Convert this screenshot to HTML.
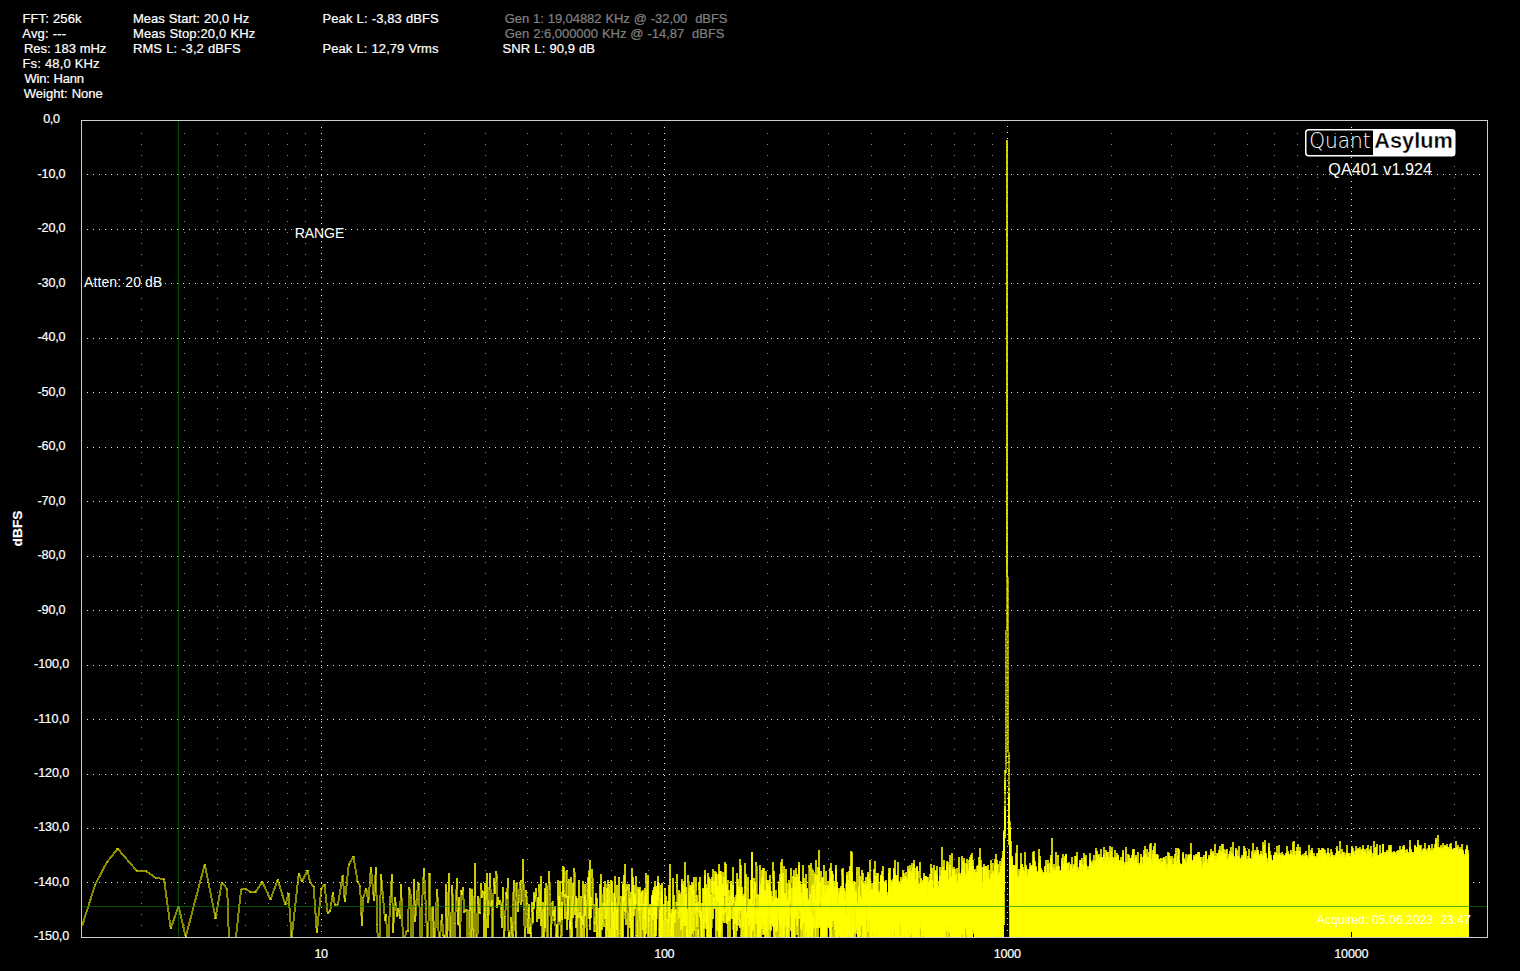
<!DOCTYPE html>
<html lang="en"><head><meta charset="utf-8"><title>QA401 Audio Analyzer</title>
<style>
html,body{margin:0;padding:0;background:#000;width:1520px;height:971px;overflow:hidden}
svg{position:absolute;left:0;top:0;display:block}
text{font-family:"Liberation Sans",Arial,sans-serif;white-space:pre}
.px{shape-rendering:crispEdges;fill:none;stroke-width:1}
</style></head><body>
<svg width="1520" height="971" viewBox="0 0 1520 971">
<rect width="1520" height="971" fill="#000"/>
<g class="px"><path d="M87 174.5h1393M87 229.5h1393M87 283.5h1393M87 338.5h1393M87 392.5h1393M87 447.5h1393M87 501.5h1393M87 556.5h1393M87 610.5h1393M87 665.5h1393M87 719.5h1393M87 774.5h1393M87 828.5h1393M87 882.5h1393" stroke="#e2e2e2" stroke-dasharray="1 5"/><path d="M141.5 133v793M184.5 133v793M217.5 133v793M245.5 133v793M268.5 133v793M287.5 133v793M305.5 133v793M485.5 133v793M527.5 133v793M561.5 133v793M588.5 133v793M611.5 133v793M631.5 133v793M648.5 133v793M828.5 133v793M871.5 133v793M904.5 133v793M931.5 133v793M954.5 133v793M974.5 133v793M992.5 133v793M1171.5 133v793M1214.5 133v793M1247.5 133v793M1274.5 133v793M1297.5 133v793M1317.5 133v793M1335.5 133v793M424.5 133v793M767.5 133v793M1111.5 133v793M1454.5 133v793" stroke="#8c8c8c" stroke-dasharray="1 10"/><path d="M321.5 127v805M664.5 127v805M1351.5 127v805M1007.5 126v805" stroke="#ececec" stroke-dasharray="1 5"/></g>
<g class="px">
<path transform="translate(.5 0)" stroke="#ff0" stroke-opacity="0.55" d="M82 921v5M83 918v7M84 915v7M85 912v6M86 909v6M87 906v6M88 902v7M89 899v7M90 896v7M91 893v7M92 890v6M93 887v6M94 885v5M95 882v2M95 885v2M96 880v4M97 878v4M98 876v4M99 874v4M100 872v5M101 870v5M102 868v5M103 866v5M104 865v4M105 863v4M106 861v1M106 863v2M107 860v2M108 859v3M109 857v3M110 856v3M111 855v3M112 854v3M113 852v4M114 851v3M115 850v3M116 849v3M117 850v1M118 849v2M119 849v3M120 850v4M121 852v3M122 853v3M123 854v3M124 855v3M125 856v3M126 857v3M127 859v3M128 860v3M129 861v3M130 862v3M131 863v3M132 864v3M133 866v3M134 867v3M135 868v3M136 869v1M136 871v1M137 871v1M138 870v2M139 870v2M140 870v2M141 870v2M142 870v2M143 870v2M144 870v2M145 870v2M146 872v1M147 871v2M148 872v2M149 872v3M150 873v2M151 874v2M152 874v3M153 875v3M154 876v2M156 877v2M157 877v2M158 877v2M159 877v2M160 878v2M161 878v2M162 878v2M163 878v1M163 880v3M164 878v1M164 880v10M165 883v15M166 890v15M167 897v15M168 905v15M169 912v15M170 920v6M171 923v4M172 920v6M173 917v7M174 915v6M175 912v6M176 909v6M177 906v6M178 909v1M179 906v9M180 910v9M181 914v9M182 919v9M183 923v9M184 927v9M185 932v2M186 930v6M187 926v8M188 922v8M189 918v8M190 915v8M191 911v8M192 907v8M193 903v8M194 899v8M195 895v8M196 892v8M197 888v8M198 884v8M199 880v8M200 876v8M201 873v7M202 869v8M203 865v8M204 868v1M205 865v8M206 868v10M207 873v10M208 878v10M209 883v10M210 888v10M211 893v10M212 898v10M213 903v10M214 908v10M215 912v1M216 907v11M217 901v11M218 895v12M219 890v11M220 884v12M221 883v7M222 884v1M223 883v3M224 884v3M225 885v4M226 887v2M226 890v8M227 888v1M227 890v37M228 898v39M229 927v10M235 932v5M236 923v14M237 913v19M238 904v19M239 895v18M240 889v15M241 888v1M241 890v5M242 888v2M243 888v2M244 888v2M246 888v3M247 889v2M248 890v2M249 890v3M251 891v2M252 891v2M253 891v2M254 891v1M255 890v1M256 889v4M257 887v4M258 886v3M259 884v4M260 882v4M261 883v2M262 883v2M263 882v5M264 884v5M265 886v5M266 889v4M267 891v5M268 893v5M269 895v5M271 894v5M272 891v6M273 888v6M274 886v5M275 883v6M276 880v6M277 882v1M278 880v6M279 882v7M280 885v7M281 889v7M282 892v7M283 895v7M284 899v5M285 901v1M286 897v8M287 894v7M288 897v11M289 894v28M290 908v29M291 922v8M292 921v16M293 912v18M294 903v18M295 894v18M296 885v18M297 876v18M298 876v9M299 876v2M300 875v6M301 878v2M302 878v2M303 876v5M304 874v5M305 872v5M306 871v4M307 873v2M308 871v9M309 875v7M310 879v3M310 883v1M311 882v4M312 884v3M313 885v1M313 887v12M314 887v27M315 899v29M316 913v13M317 916v12M318 907v19M319 897v19M320 889v18M321 887v1M321 889v8M322 885v4M323 884v3M324 886v8M325 885v18M326 894v18M327 903v9M328 911v1M329 909v1M329 912v1M330 902v8M331 895v14M332 897v5M333 895v8M334 897v7M334 905v1M335 903v1M335 905v1M336 904v2M337 901v3M337 905v1M338 895v10M339 889v12M340 882v13M341 876v13M342 882v4M343 876v22M344 886v9M345 886v12M346 876v19M347 867v19M348 863v1M348 865v11M349 861v3M349 865v2M350 860v4M351 858v4M352 857v3M353 858v5M354 856v13M355 863v12M356 869v13M357 875v6M357 882v1M358 882v3M359 883v3M359 887v8M360 885v1M360 887v29M361 895v17M362 898v18M363 894v3M363 898v14M364 890v7M365 891v3M366 891v6M367 890v10M368 887v10M369 873v27M370 874v13M371 873v11M372 874v21M373 884v8M374 875v20M375 892v4M376 875v49M376 925v8M377 895v29M377 925v12M378 933v4M379 895v42M380 880v57M381 891v4M382 880v17M382 898v5M383 891v6M383 898v16M384 903v14M385 921v3M386 917v20M387 924v13M388 916v21M389 896v8M389 905v32M390 881v23M390 905v12M391 897v6M392 882v41M393 903v3M394 902v21M395 906v5M396 902v10M398 912v4M399 901v9M400 898v17M401 901v26M402 898v39M403 927v10M404 935v2M405 931v6M406 930v1M406 932v3M407 909v21M408 890v40M409 895v14M410 889v8M410 898v39M411 894v3M411 898v39M412 905v32M413 900v37M414 905v10M415 900v4M416 890v9M416 900v16M417 883v16M417 900v5M418 891v16M419 883v1M419 885v52M420 907v30M421 895v9M421 905v32M422 877v27M422 905v32M423 880v15M424 877v15M424 893v7M425 880v12M425 893v15M425 909v14M426 900v8M426 909v28M427 921v2M428 874v63M429 907v14M430 873v1M430 875v62M431 907v30M432 921v16M434 921v7M435 902v35M436 897v31M437 902v3M437 906v25M438 897v8M438 906v31M439 931v1M440 920v17M441 925v7M442 920v15M443 924v11M444 934v1M445 917v20M447 892v25M448 916v15M449 892v45M450 912v4M451 895v42M452 912v25M453 894v10M453 905v32M454 912v11M454 924v13M455 889v34M455 924v13M456 901v11M457 889v21M458 925v1M459 911v11M460 892v33M461 895v27M462 895v5M463 891v20M464 899v11M465 910v1M466 911v26M467 909v1M467 911v26M468 910v23M468 934v3M469 929v4M469 934v3M470 911v18M472 930v7M473 896v32M474 913v17M474 931v6M475 897v40M476 913v21M477 904v33M478 913v21M479 898v6M480 890v22M482 890v1M483 895v18M485 913v1M486 900v19M488 887v13M489 890v12M489 903v12M490 888v15M491 889v11M491 907v30M492 893v7M493 886v23M493 910v27M495 874v11M496 882v20M497 874v3M497 878v19M500 902v6M500 909v9M501 902v2M502 916v1M503 902v28M504 910v6M505 895v9M505 905v11M505 917v14M506 888v4M506 899v5M506 905v5M507 899v32M508 888v44M509 930v2M510 922v15M511 935v2M512 892v12M512 905v17M513 901v3M513 905v29M514 892v30M514 923v8M515 883v18M516 882v1M516 897v34M517 882v1M517 884v18M518 889v6M518 896v1M519 882v2M519 885v10M519 896v7M520 890v12M521 882v7M522 884v16M522 901v1M523 890v19M523 910v16M524 884v25M524 910v18M525 897v16M525 914v12M526 907v6M526 914v14M527 896v7M527 904v6M527 911v7M529 919v8M530 918v6M531 912v20M532 923v2M533 909v3M535 900v2M536 896v13M538 892v5M541 926v10M542 906v3M545 885v3M545 928v4M546 905v32M547 885v2M547 888v1M548 883v25M548 909v28M549 890v4M549 895v9M549 905v11M550 882v12M550 895v9M550 905v19M551 902v1M551 904v12M552 916v8M553 902v8M553 916v3M554 921v5M555 920v14M557 900v24M558 921v15M559 922v3M560 922v13M561 892v10M561 920v5M562 897v5M562 920v16M563 897v8M564 882v9M564 892v2M565 871v2M565 874v20M565 898v6M566 898v14M567 872v24M569 899v6M569 906v15M569 929v8M572 918v5M572 924v2M573 872v2M573 875v8M574 896v9M575 872v4M575 877v19M575 915v6M576 928v9M578 918v19M579 911v1M579 918v19M582 898v18M582 925v3M585 916v12M586 883v7M586 891v9M587 907v21M591 878v19M592 905v4M593 878v9M593 888v16M593 906v16M593 923v9M594 904v1M594 906v11M595 925v5M601 930v7M602 894v9M604 919v4M606 884v4M616 898v4M619 905v25M619 931v2M619 934v3M620 898v5M622 881v3M624 912v2M624 915v4M626 913v6M627 890v21M628 907v6M635 909v26M635 936v1M636 905v2M642 930v7M645 882v6M657 907v2M657 910v9M658 907v22M658 930v7M675 903v6M676 893v9M676 906v3M677 906v1M680 892v2M687 882v27M689 881v4M692 934v3M694 931v6M696 891v4M697 927v2M698 890v12M699 917v20M711 893v1M712 919v9M717 931v6M724 896v1M728 882v8M732 919v11M740 928v7M740 936v1M755 866v16M757 866v4M757 871v23M758 894v1M772 878v18M778 881v1M791 883v5M797 935v2M799 919v18M808 868v31M812 868v2M814 872v2M832 927v2M841 875v11M845 883v2M845 886v5M863 880v2M879 882v8M879 891v1M883 875v1M919 878v5M993 865v6M1003 830v1M1004 772v1M1004 774v4M1004 779v1M1004 791v1M1004 794v4M1004 799v2M1004 803v3M1004 892v2M1005 630v3M1005 634v5M1005 640v5M1005 646v5M1005 652v5M1005 658v4M1005 663v3M1005 667v5M1005 673v4M1005 678v3M1005 682v3M1005 686v4M1005 691v3M1005 695v3M1005 699v3M1005 703v3M1005 707v3M1005 711v3M1005 715v2M1005 718v3M1005 722v2M1005 725v2M1005 728v4M1005 733v2M1005 736v3M1005 740v3M1005 744v2M1005 747v1M1005 749v2M1005 752v2M1005 755v1M1005 758v2M1005 761v2M1005 764v6M1005 774v4M1005 779v1M1005 791v1M1005 794v4M1005 799v2M1005 803v3M1006 577v3M1006 581v8M1006 590v7M1006 598v7M1006 606v7M1006 614v6M1006 621v6M1006 628v5M1006 634v5M1006 640v5M1006 646v5M1006 652v5M1006 658v4M1006 663v3M1006 667v5M1006 673v4M1006 678v3M1006 682v3M1006 686v4M1006 691v3M1006 695v3M1006 699v3M1006 703v3M1006 707v3M1006 711v3M1006 715v2M1006 718v3M1006 722v2M1006 725v2M1006 728v4M1006 733v2M1006 736v3M1006 740v3M1006 744v2M1006 747v1M1006 749v2M1006 752v2M1006 755v1M1006 758v2M1006 761v2M1006 764v7M1007 630v4M1007 635v6M1007 642v5M1007 648v4M1007 653v4M1007 658v5M1007 664v4M1007 669v3M1007 673v4M1007 678v4M1007 683v4M1007 688v2M1007 691v5M1007 697v2M1007 700v3M1007 704v2M1007 707v4M1007 712v1M1007 714v3M1007 718v4M1007 723v2M1007 726v1M1007 728v2M1007 731v3M1007 735v2M1007 738v3M1007 743v4M1007 748v2M1007 751v2M1008 577v5M1008 583v8M1008 592v7M1008 600v7M1008 608v6M1008 615v6M1008 622v6M1008 629v5M1008 635v6M1008 642v5M1008 648v4M1008 653v4M1008 658v5M1008 664v4M1008 669v3M1008 673v4M1008 678v4M1008 683v4M1008 688v2M1008 691v5M1008 697v2M1008 700v3M1008 704v2M1008 707v4M1008 712v1M1008 714v3M1008 718v4M1008 723v2M1008 726v1M1008 728v2M1008 731v3M1008 735v2M1008 738v3M1008 743v4M1008 748v2M1008 751v4M1008 757v1M1008 759v2M1008 763v6M1008 772v1M1008 774v1M1008 776v2M1008 779v3M1008 784v4M1008 791v2M1009 752v3M1009 757v1M1009 759v2M1009 763v6M1009 772v1M1009 774v1M1009 776v2M1009 779v3M1009 784v4M1009 791v2M1010 821v2M1010 825v2"/>
<path transform="translate(.5 0)" stroke="#ff0" stroke-opacity="0.798" d="M94 884v1M95 884v1M106 862v1M107 862v1M116 848v1M117 848v2M118 848v1M136 870v1M137 870v1M146 870v2M155 877v2M163 879v1M164 879v1M170 926v3M171 927v2M178 906v3M185 934v3M186 936v1M204 864v4M205 864v1M214 918v1M215 913v6M216 918v1M221 882v1M222 882v2M226 889v1M227 889v1M241 889v1M245 888v2M250 891v2M254 892v1M255 891v2M261 881v2M262 881v2M270 897v3M271 899v1M277 879v3M278 879v1M284 904v1M285 902v3M287 893v1M288 893v4M289 893v1M291 930v7M298 873v3M299 873v3M301 880v2M302 880v2M306 870v1M307 870v3M308 870v1M309 882v1M310 882v1M313 886v1M314 886v1M316 926v7M317 928v5M320 888v1M321 888v1M324 884v2M325 884v1M327 912v2M328 912v2M329 910v2M330 910v2M332 892v5M333 892v3M334 904v1M335 904v1M337 904v1M342 875v7M343 875v1M344 895v7M345 898v4M348 864v1M349 864v1M352 856v1M353 856v2M357 881v1M358 881v1M359 886v1M360 886v1M361 912v14M362 897v1M362 916v10M363 897v1M365 888v3M366 888v3M367 900v3M368 897v6M370 867v7M371 867v6M373 892v9M374 895v6M375 867v25M376 867v8M376 924v1M377 924v1M380 874v6M381 874v17M382 897v1M383 897v1M384 917v4M386 914v3M389 904v1M390 904v1M391 874v23M392 874v8M392 923v10M393 906v27M394 897v5M395 897v9M396 912v5M397 908v9M398 908v4M399 910v9M400 884v14M400 915v4M401 884v17M406 931v1M407 930v2M408 887v3M408 930v2M409 887v8M410 897v1M411 897v1M413 879v21M414 879v26M414 915v7M415 904v18M416 899v1M417 882v1M417 899v1M418 882v2M418 885v6M419 884v1M421 904v1M422 904v1M423 868v12M424 868v9M424 892v1M425 892v1M425 908v1M426 908v1M427 923v14M428 873v1M429 873v1M429 875v32M430 874v1M432 906v15M433 906v30M434 928v8M436 889v8M437 889v13M437 905v1M438 905v1M439 932v5M441 914v11M442 914v6M442 935v1M443 935v2M444 935v1M445 884v33M446 884v47M446 934v3M447 917v20M448 873v43M449 873v19M450 916v21M451 885v10M452 885v19M452 905v7M453 904v1M454 923v1M455 923v1M456 878v23M457 878v11M457 910v15M458 897v4M459 897v14M459 922v15M460 890v2M460 925v12M462 887v5M463 887v4M463 911v2M464 910v1M464 912v1M465 909v1M465 911v1M466 909v2M467 910v1M468 933v1M469 888v41M469 933v1M470 888v23M470 929v8M471 889v48M472 889v41M473 928v2M473 931v6M474 863v50M474 930v1M475 863v34M476 934v3M477 896v8M478 896v16M479 904v8M479 913v1M480 883v7M480 912v2M481 883v11M482 893v5M483 891v4M483 913v24M484 883v9M484 920v17M485 883v30M485 914v23M486 873v27M486 919v18M487 873v41M487 915v13M488 900v2M488 903v25M489 873v17M489 902v1M490 873v15M490 903v4M492 903v6M492 910v27M493 878v8M493 909v1M494 878v4M495 871v3M495 885v9M496 871v6M496 878v4M496 902v6M497 877v1M497 901v7M498 897v8M499 904v1M500 900v2M500 908v1M501 904v4M501 909v8M501 918v10M502 887v29M502 918v10M503 887v15M503 930v7M504 917v20M505 892v3M505 904v1M505 916v1M506 904v1M507 878v17M508 878v10M510 917v5M511 917v10M511 928v7M512 904v1M512 922v5M512 928v9M513 880v21M513 904v1M513 934v3M514 880v12M514 922v1M515 901v21M515 923v14M516 884v13M516 931v6M517 883v1M517 902v8M517 911v1M518 895v1M518 897v13M518 911v1M519 884v1M519 895v1M520 880v4M520 885v5M520 902v3M521 880v2M521 889v11M521 901v4M522 859v20M522 880v4M522 900v1M523 859v20M523 880v10M523 909v1M524 909v1M524 928v9M525 890v7M525 913v1M525 926v11M526 890v13M526 904v3M526 913v1M527 903v1M527 910v1M527 918v16M528 904v2M528 919v15M529 904v15M529 933v1M530 924v3M530 934v3M531 902v9M531 932v5M532 902v5M533 892v10M533 912v11M534 892v3M534 907v2M535 888v7M535 897v3M536 888v7M536 909v3M536 913v9M537 897v3M537 908v4M537 913v9M538 884v8M538 909v10M539 884v15M539 900v7M539 912v7M540 876v15M540 910v16M541 876v36M541 936v1M542 902v4M542 909v28M543 902v8M543 911v20M544 888v17M544 928v9M545 883v2M546 883v4M546 888v10M546 899v6M547 887v1M547 889v9M547 899v9M547 909v28M548 871v12M548 908v1M549 871v19M549 894v1M549 904v1M550 894v1M550 904v1M550 924v4M550 929v8M551 903v1M551 916v12M551 929v8M552 901v2M552 904v8M553 901v1M553 919v2M554 906v4M555 906v13M555 934v3M556 924v1M557 880v20M557 935v1M558 880v16M558 936v1M559 881v15M560 881v27M560 935v2M561 925v12M562 866v15M563 866v1M564 867v15M564 891v1M564 896v23M565 873v1M565 904v15M566 870v3M566 874v21M566 912v18M567 870v2M567 920v10M568 879v17M568 917v3M569 879v20M569 905v1M570 877v39M570 929v8M571 877v26M572 883v12M572 923v1M572 926v11M573 868v4M573 874v1M573 903v15M574 868v6M574 875v1M574 877v19M574 905v10M575 876v1M575 921v7M576 896v2M577 898v12M577 921v16M578 880v34M579 880v31M580 896v16M580 929v8M581 896v20M582 881v17M582 928v9M583 881v33M583 925v12M584 884v11M584 916v21M585 884v11M586 890v1M586 900v5M586 907v30M587 877v13M587 891v4M587 896v11M587 928v9M588 871v6M588 900v19M589 860v11M589 919v11M590 860v37M590 919v11M591 869v9M591 908v10M592 869v18M592 888v12M592 901v3M593 887v1M593 904v2M593 922v1M594 905v1M594 917v5M594 924v6M595 893v19M595 913v10M595 924v1M595 930v2M596 893v5M597 898v27M598 908v29M599 884v24M600 874v10M601 874v34M602 924v6M603 887v16M603 909v12M603 922v5M604 881v6M604 923v4M605 881v21M605 919v18M607 880v8M607 931v6M608 880v4M609 884v6M610 880v20M610 901v27M611 880v1M612 881v21M613 893v19M614 876v17M615 876v21M616 885v13M616 902v5M616 908v1M616 930v7M617 885v19M618 878v19M618 904v6M618 911v21M618 933v4M619 878v27M619 930v1M619 933v1M620 896v2M620 903v27M620 931v2M620 934v3M621 896v3M621 900v10M623 875v9M623 910v27M624 864v11M624 914v1M625 864v25M625 912v2M625 915v10M626 884v3M626 888v1M626 891v3M626 895v18M626 919v6M627 884v3M627 888v1M627 911v26M628 884v4M628 889v2M628 892v15M628 913v24M629 884v4M629 889v2M629 892v6M629 921v2M629 924v4M630 892v6M630 928v2M630 931v6M631 868v8M631 877v15M632 868v8M633 877v8M633 916v21M634 885v8M634 909v7M635 876v18M635 935v1M636 876v26M636 903v2M636 907v18M636 926v6M636 933v2M636 936v1M637 887v3M637 891v29M638 887v2M638 911v26M639 887v2M639 921v16M640 887v6M641 891v1M641 910v27M642 890v1M643 890v12M643 903v1M643 930v7M644 888v8M645 873v9M645 934v3M646 873v17M646 891v1M646 928v6M647 875v6M647 907v16M647 924v13M648 875v33M649 904v1M649 915v2M649 922v15M650 904v1M650 916v8M650 925v12M651 895v1M652 890v2M652 920v17M653 887v3M653 920v15M653 936v1M654 881v6M655 881v5M655 936v1M656 930v6M657 876v6M657 909v1M658 876v6M658 929v1M659 883v8M659 895v3M659 899v11M660 885v13M661 883v2M662 883v8M663 904v4M663 909v11M664 889v15M665 889v7M666 896v2M666 899v11M666 912v6M667 901v18M668 885v16M669 864v15M669 880v5M670 864v15M670 880v14M670 895v5M670 901v12M670 936v1M671 909v4M672 878v31M673 878v17M674 895v15M674 923v14M675 902v1M675 909v1M675 923v14M676 874v12M676 887v6M676 909v1M676 911v26M677 874v12M677 887v16M677 907v5M677 914v4M677 919v18M678 890v3M678 919v18M679 890v4M679 918v19M680 930v7M681 879v5M681 930v7M682 879v5M683 881v6M683 926v11M684 862v19M684 926v11M685 862v25M685 926v11M686 887v4M686 892v2M687 875v7M688 875v13M688 889v1M690 885v1M691 882v4M691 934v3M692 882v2M693 877v7M693 931v6M694 877v13M695 877v8M695 886v10M695 897v2M695 901v2M695 915v22M696 877v8M696 886v5M696 927v10M697 895v7M697 913v1M698 882v1M698 884v6M698 913v16M699 877v5M700 877v12M700 931v6M701 903v8M702 888v1M702 890v13M703 888v1M704 870v5M704 928v9M705 870v5M705 922v7M706 884v4M706 929v8M707 873v8M707 882v6M708 873v4M709 877v2M710 879v15M711 877v4M712 869v8M713 869v12M713 908v8M713 917v2M714 871v10M714 894v3M714 908v1M715 871v1M715 909v28M716 872v2M716 931v6M717 874v10M717 885v1M718 864v10M719 864v7M721 871v4M721 931v1M721 933v4M722 872v12M722 921v11M722 933v4M723 872v5M723 921v2M724 862v2M724 865v12M724 897v12M724 914v9M725 862v2M725 912v11M726 864v18M726 923v1M727 880v4M727 924v13M728 880v2M728 902v1M728 921v16M729 890v6M729 921v16M730 882v1M730 919v18M731 882v1M731 905v14M732 867v18M733 867v18M733 903v3M734 897v5M734 903v3M735 895v4M735 924v9M735 934v3M736 873v21M736 931v2M736 934v3M737 873v6M737 925v6M738 879v3M738 883v3M738 920v6M739 859v28M739 926v2M740 859v6M740 911v8M740 935v1M741 865v22M742 887v7M742 895v1M743 894v2M744 863v24M744 888v6M745 863v11M746 874v38M747 877v12M747 890v15M748 877v12M748 890v9M748 936v1M750 880v19M752 931v6M753 878v1M753 880v8M753 931v6M754 878v1M754 880v2M755 862v4M755 898v10M755 924v11M755 936v1M756 862v8M756 871v23M756 924v3M756 928v9M757 870v1M759 865v19M760 865v19M761 870v7M761 929v8M762 868v2M762 929v2M762 932v3M763 934v1M764 868v1M764 870v20M764 934v3M765 871v19M766 871v9M768 880v1M768 882v1M769 875v5M769 929v8M770 875v11M770 931v6M771 891v1M771 893v3M771 925v3M771 929v2M772 862v16M772 925v2M773 862v9M773 935v2M774 871v6M775 890v7M775 932v3M776 890v7M776 932v5M777 931v6M778 920v17M779 874v8M780 862v12M781 859v3M782 859v14M783 866v7M784 866v27M785 869v7M785 877v16M785 927v10M786 869v7M786 877v6M787 883v14M788 880v10M789 880v3M789 928v9M790 868v5M790 874v10M790 904v4M790 916v12M790 929v2M791 868v5M791 874v9M792 876v1M792 878v10M793 870v6M794 870v7M795 868v9M795 919v18M796 868v6M796 926v9M797 874v3M798 862v3M798 919v18M799 862v3M800 881v3M800 929v8M801 884v9M802 865v19M802 931v6M803 865v13M804 878v6M805 874v10M806 874v14M807 888v1M808 865v3M809 865v5M809 871v21M809 893v1M810 863v4M810 869v1M810 871v21M810 893v1M811 863v11M811 875v11M812 872v2M812 875v9M813 870v4M813 875v9M813 930v7M814 928v9M815 860v14M816 860v15M816 928v9M817 867v8M817 928v9M818 850v17M818 928v9M819 850v18M819 927v1M820 871v11M820 902v1M820 904v2M821 871v7M822 877v1M823 865v12M824 865v20M825 871v14M826 871v14M827 881v4M827 928v9M828 881v5M828 927v1M829 868v11M829 930v7M830 863v5M831 863v8M832 929v8M833 874v7M833 921v16M834 881v2M834 884v2M834 930v7M835 865v4M836 865v4M838 888v6M839 888v3M839 936v1M840 886v2M841 869v6M842 868v1M843 868v7M844 888v3M845 885v1M846 872v3M847 872v3M848 871v4M848 876v4M849 866v5M850 851v15M851 851v1M852 852v20M853 881v2M854 881v1M854 933v4M855 882v7M855 890v1M855 934v3M856 867v5M856 873v1M856 875v15M856 930v4M857 867v5M857 873v1M857 875v27M858 867v20M859 867v9M860 876v20M860 936v1M861 870v10M861 926v11M862 870v3M863 873v7M864 881v3M865 877v4M866 877v7M867 872v2M867 932v5M868 872v2M868 932v5M869 860v19M870 860v19M871 883v6M872 883v6M873 869v13M874 861v8M875 861v15M876 873v3M878 873v18M879 890v1M881 871v3M882 866v5M883 866v9M884 881v1M885 880v2M886 880v3M887 892v3M888 868v5M890 868v12M891 880v3M892 879v3M893 868v1M894 860v8M895 860v14M896 875v1M897 862v13M898 862v19M899 881v2M900 877v6M901 877v3M902 870v9M903 870v3M904 873v3M905 872v4M906 872v5M907 866v13M908 866v3M909 865v4M910 865v6M911 863v8M911 935v2M912 863v5M913 860v4M914 860v4M915 868v11M916 866v1M917 866v1M918 871v11M918 883v1M919 862v7M919 870v6M919 877v1M920 862v7M920 870v6M920 877v1M920 929v8M922 880v1M923 873v4M923 936v1M924 873v3M928 877v5M929 874v6M930 864v10M931 864v4M932 868v12M933 865v3M933 869v19M934 865v3M934 869v2M935 870v1M936 866v4M937 866v9M938 881v5M939 867v9M940 867v9M941 847v23M942 847v20M943 860v7M944 860v10M945 870v1M946 861v4M946 931v6M947 861v1M948 862v17M948 933v4M949 855v10M949 933v4M950 855v10M951 853v23M952 853v16M953 867v2M954 867v2M955 869v5M956 868v6M957 868v13M958 857v16M959 857v16M960 873v2M961 856v13M962 856v5M962 935v2M963 858v3M964 858v5M965 863v11M965 929v8M966 859v5M966 935v2M967 859v5M968 860v9M969 857v3M970 855v2M971 853v2M972 853v7M973 860v6M973 931v3M974 869v2M975 869v3M976 866v6M977 865v1M978 857v8M979 848v9M980 848v12M981 860v7M982 867v8M982 876v6M983 864v3M984 864v3M987 865v4M988 865v5M989 870v9M990 860v14M991 860v4M992 863v3M992 867v4M993 863v2M994 859v6M995 854v5M996 854v6M997 860v4M998 864v10M999 861v11M1000 861v5M1001 858v4M1002 851v4M1004 770v2M1004 773v1M1004 778v1M1004 790v1M1004 798v1M1004 894v6M1004 901v7M1004 909v7M1004 917v8M1005 633v1M1005 639v1M1005 645v1M1005 651v1M1005 657v1M1005 662v1M1005 666v1M1005 672v1M1005 677v1M1005 681v1M1005 685v1M1005 690v1M1005 694v1M1005 698v1M1005 702v1M1005 706v1M1005 710v1M1005 714v1M1005 717v1M1005 721v1M1005 724v1M1005 727v1M1005 732v1M1005 739v1M1005 743v1M1005 746v1M1005 748v1M1005 751v1M1005 754v1M1005 756v2M1005 760v1M1005 763v1M1005 773v1M1005 778v1M1005 790v1M1005 798v1M1005 831v7M1006 140v7M1006 148v58M1006 207v28M1006 236v71M1006 308v12M1006 321v40M1006 362v8M1006 371v29M1006 401v5M1006 407v23M1006 431v4M1006 436v18M1006 455v4M1006 460v15M1006 476v3M1006 480v13M1006 494v3M1006 498v12M1006 511v2M1006 514v10M1006 525v2M1006 528v9M1006 538v2M1006 541v8M1006 550v1M1006 552v8M1006 561v1M1006 563v7M1006 571v1M1006 573v4M1006 580v1M1006 589v1M1006 597v1M1006 605v1M1006 613v1M1006 620v1M1006 627v1M1006 633v1M1006 639v1M1006 645v1M1006 651v1M1006 657v1M1006 662v1M1006 666v1M1006 672v1M1006 677v1M1006 681v1M1006 685v1M1006 690v1M1006 694v1M1006 698v1M1006 702v1M1006 706v1M1006 710v1M1006 714v1M1006 717v1M1006 721v1M1006 724v1M1006 727v1M1006 732v1M1006 739v1M1006 743v1M1006 746v1M1006 748v1M1006 751v1M1006 754v1M1006 756v2M1006 760v1M1006 763v1M1006 771v2M1007 140v7M1007 148v58M1007 207v28M1007 236v71M1007 308v12M1007 321v40M1007 362v8M1007 371v29M1007 401v5M1007 407v23M1007 431v4M1007 436v18M1007 455v4M1007 460v15M1007 476v3M1007 480v13M1007 494v3M1007 498v12M1007 511v2M1007 514v10M1007 525v2M1007 528v9M1007 538v2M1007 541v8M1007 550v1M1007 552v8M1007 561v1M1007 563v7M1007 571v1M1007 573v7M1007 581v1M1007 583v6M1007 590v1M1007 592v5M1007 598v1M1007 600v5M1007 606v1M1007 608v5M1007 615v5M1007 622v5M1007 629v1M1007 634v1M1007 641v1M1007 647v1M1007 652v1M1007 657v1M1007 663v1M1007 668v1M1007 672v1M1007 677v1M1007 682v1M1007 687v1M1007 690v1M1007 696v1M1007 699v1M1007 703v1M1007 706v1M1007 711v1M1007 713v1M1007 717v1M1007 722v1M1007 725v1M1007 727v1M1007 730v1M1007 734v1M1007 737v1M1007 741v2M1007 747v1M1007 750v1M1008 582v1M1008 591v1M1008 599v1M1008 607v1M1008 614v1M1008 621v1M1008 628v1M1008 634v1M1008 641v1M1008 647v1M1008 652v1M1008 657v1M1008 663v1M1008 668v1M1008 672v1M1008 677v1M1008 682v1M1008 687v1M1008 690v1M1008 696v1M1008 699v1M1008 703v1M1008 706v1M1008 711v1M1008 713v1M1008 717v1M1008 722v1M1008 725v1M1008 727v1M1008 730v1M1008 734v1M1008 737v1M1008 741v2M1008 747v1M1008 750v1M1008 755v2M1008 758v1M1008 761v2M1008 769v3M1008 775v1M1008 778v1M1008 782v2M1008 790v1M1008 833v12M1009 755v2M1009 758v1M1009 761v2M1009 769v3M1009 775v1M1009 778v1M1009 782v2M1009 790v1M1009 910v27M1010 823v2M1011 841v15M1012 856v3M1015 853v12M1016 845v8M1017 845v30M1018 869v7M1019 869v2M1020 853v13M1021 853v11M1023 867v3M1024 852v19M1025 852v13M1026 865v2M1027 869v6M1028 869v1M1029 863v5M1030 863v3M1031 865v1M1032 852v9M1032 862v3M1033 851v1M1034 851v7M1035 861v5M1036 866v2M1037 871v1M1038 849v14M1039 849v7M1040 856v4M1041 868v2M1042 870v2M1043 872v1M1044 866v1M1045 860v6M1046 860v12M1047 860v4M1048 860v4M1049 863v10M1050 855v3M1051 838v17M1052 838v29M1053 864v3M1054 864v6M1055 852v16M1056 852v14M1057 855v1M1057 857v9M1058 855v1M1058 857v9M1059 866v5M1060 870v1M1061 858v3M1062 854v4M1063 854v10M1064 856v2M1068 862v1M1069 862v8M1070 864v1M1071 857v7M1072 857v11M1073 864v2M1074 856v8M1076 852v4M1077 852v15M1078 867v3M1079 860v3M1081 858v2M1082 858v6M1083 853v12M1084 853v4M1085 855v2M1086 855v9M1087 866v3M1088 866v3M1089 853v6M1090 853v6M1091 861v2M1092 860v3M1093 855v5M1094 855v6M1095 848v12M1096 848v3M1097 851v4M1098 854v1M1099 854v4M1100 849v8M1101 849v8M1103 847v7M1104 847v7M1105 850v8M1106 850v2M1108 852v5M1109 846v11M1110 846v5M1111 847v4M1112 847v10M1113 857v1M1114 850v8M1115 850v7M1116 853v4M1117 853v2M1119 860v1M1120 857v3M1121 857v4M1122 850v3M1123 850v3M1124 862v3M1125 847v15M1126 847v15M1127 854v8M1128 854v1M1129 855v3M1131 855v3M1132 849v1M1134 849v11M1135 855v2M1136 855v2M1137 852v11M1138 852v11M1139 863v2M1140 854v3M1141 854v3M1142 857v7M1143 850v6M1144 846v4M1145 846v8M1146 849v5M1147 849v8M1148 852v5M1149 844v8M1150 843v1M1151 843v16M1152 850v4M1153 846v4M1154 843v3M1155 843v12M1158 855v4M1160 858v1M1161 858v4M1162 858v4M1163 857v1M1164 857v1M1165 856v4M1166 856v8M1167 852v12M1168 852v1M1169 853v3M1170 856v3M1171 856v3M1172 856v8M1173 858v6M1174 854v4M1175 848v6M1176 848v13M1177 848v8M1178 848v1M1179 849v11M1180 863v1M1182 852v2M1183 852v2M1184 858v2M1185 854v6M1186 854v8M1187 855v3M1188 854v1M1189 854v1M1190 843v11M1191 843v11M1192 860v1M1193 855v3M1194 855v1M1195 854v2M1197 852v2M1201 857v5M1202 857v8M1203 855v2M1204 855v6M1205 851v1M1206 851v1M1207 859v4M1208 855v2M1209 855v2M1210 849v3M1211 849v3M1212 851v2M1213 851v2M1214 844v12M1215 844v12M1216 853v3M1218 850v3M1219 846v4M1220 846v5M1221 844v7M1223 844v5M1224 849v4M1225 850v4M1226 849v1M1227 849v10M1228 854v3M1229 851v3M1230 847v4M1231 847v6M1232 842v11M1233 842v12M1234 856v2M1235 848v2M1236 848v2M1237 850v6M1238 846v10M1239 846v11M1240 858v1M1241 855v2M1242 855v2M1243 846v6M1244 846v2M1245 848v3M1246 851v8M1247 856v3M1248 849v7M1249 849v9M1250 858v1M1251 851v8M1252 843v8M1253 843v11M1254 850v3M1255 850v2M1256 847v5M1257 847v3M1259 854v2M1260 851v3M1261 851v3M1262 842v13M1263 842v3M1264 840v5M1265 840v13M1266 853v4M1267 858v4M1268 843v4M1269 843v4M1270 851v4M1271 855v3M1272 860v1M1274 852v3M1275 852v1M1276 846v7M1277 846v9M1278 845v9M1279 845v8M1280 853v2M1281 852v3M1282 852v2M1283 854v2M1284 855v1M1285 853v2M1286 846v7M1287 846v5M1288 851v2M1290 850v3M1291 850v3M1292 842v13M1293 841v1M1294 841v10M1295 851v4M1296 847v4M1297 844v3M1298 844v7M1299 847v4M1300 847v4M1301 855v1M1302 854v1M1303 854v2M1304 853v3M1305 851v2M1306 851v4M1307 855v1M1308 845v13M1309 845v9M1310 850v3M1311 848v2M1312 848v3M1313 853v3M1314 853v3M1315 856v2M1316 853v3M1318 848v3M1319 848v2M1321 848v2M1323 848v1M1324 849v1M1325 850v3M1326 853v2M1327 848v4M1328 848v4M1329 853v1M1330 849v8M1331 849v3M1332 852v3M1334 855v2M1335 853v2M1336 846v3M1337 846v3M1339 841v10M1340 841v13M1341 849v5M1342 849v3M1344 852v3M1345 853v4M1346 845v7M1347 845v7M1349 853v3M1350 853v3M1351 846v3M1352 846v2M1353 848v3M1354 851v3M1355 846v4M1356 846v4M1357 848v2M1358 848v1M1359 847v2M1360 847v3M1361 849v1M1362 845v3M1363 845v3M1364 849v2M1365 849v2M1366 848v5M1367 845v3M1368 845v6M1369 849v2M1370 846v3M1371 846v5M1372 853v4M1373 841v12M1374 841v7M1375 847v1M1376 844v3M1377 844v11M1379 845v9M1380 845v8M1384 852v1M1386 850v2M1387 850v1M1388 845v6M1389 845v1M1390 845v1M1391 845v7M1392 852v1M1393 851v1M1394 851v1M1395 852v1M1396 851v3M1397 850v1M1398 850v1M1399 846v5M1400 846v4M1401 849v1M1402 846v3M1403 845v1M1404 845v2M1405 850v3M1406 849v1M1407 849v2M1408 852v1M1409 840v7M1410 840v7M1411 849v3M1413 852v1M1414 845v1M1415 845v1M1417 840v4M1418 840v4M1419 845v2M1421 845v6M1422 849v2M1423 848v1M1424 843v5M1425 843v6M1426 849v2M1427 848v3M1428 845v1M1429 845v1M1430 848v3M1431 844v6M1432 844v6M1433 848v1M1434 844v4M1435 838v2M1436 838v2M1437 835v12M1438 835v12M1439 847v1M1440 845v2M1441 845v3M1442 843v5M1443 843v4M1444 845v1M1445 845v1M1446 844v2M1447 844v3M1449 844v5M1450 843v1M1451 843v4M1452 849v1M1453 848v1M1455 841v7M1456 841v6M1457 845v2M1458 845v6M1459 847v2M1460 847v2M1461 844v5M1462 844v6M1463 850v2M1464 854v1M1465 849v1M1466 845v2M1467 845v2M1468 850v4"/>
<path transform="translate(.5 0)" stroke="#ff0" stroke-opacity="0.909" d="M385 914v7M418 884v1M429 874v1M433 936v1M434 936v1M444 936v1M446 931v3M452 904v1M458 901v24M461 890v5M462 892v3M464 911v1M473 930v1M478 912v1M479 912v1M481 894v4M482 891v2M484 892v2M484 895v25M487 914v1M488 902v1M491 900v7M492 900v3M492 909v1M494 882v12M496 877v1M497 897v4M499 900v4M501 908v1M501 917v1M502 917v1M504 916v1M506 892v7M507 895v4M508 932v5M509 932v5M511 927v1M512 927v1M515 922v1M516 883v1M517 910v1M518 910v1M520 884v1M521 900v1M522 879v1M523 879v1M526 903v1M528 906v4M528 911v8M529 927v6M531 911v1M532 907v4M532 912v11M533 902v7M534 895v1M534 897v10M535 895v2M536 895v1M536 912v1M537 900v8M537 912v1M538 897v12M539 899v1M539 907v5M540 891v8M540 900v10M541 912v14M543 910v1M543 931v6M544 905v1M545 888v40M546 887v1M546 898v1M547 898v1M547 908v1M550 928v1M551 928v1M552 903v1M552 912v4M553 910v6M554 913v6M554 920v1M555 919v1M556 925v12M557 924v11M557 936v1M558 909v12M559 921v1M560 908v14M561 902v18M562 881v16M562 902v18M563 893v4M564 894v2M565 894v4M566 873v1M566 895v3M567 896v3M568 913v4M569 921v8M570 916v5M571 903v20M571 924v13M572 895v23M573 883v20M574 874v1M574 876v1M575 896v19M576 905v10M576 916v12M577 910v5M577 916v5M578 914v4M579 912v6M580 915v14M581 920v17M582 916v9M583 915v5M585 914v2M586 905v2M587 890v1M587 895v1M588 884v11M588 896v4M591 897v3M591 901v7M592 887v1M592 900v1M592 904v1M594 922v2M594 930v2M595 912v1M595 923v1M596 918v19M597 925v12M600 894v21M600 916v21M601 908v6M601 915v15M602 903v11M602 915v6M602 922v2M603 903v6M603 921v1M604 908v11M605 902v3M605 906v5M605 912v2M606 888v1M606 890v18M607 915v16M608 885v16M608 902v35M609 890v10M609 901v30M610 900v1M610 928v9M611 890v12M612 928v9M613 912v1M615 914v22M616 907v1M617 904v5M617 930v2M617 933v4M618 877v1M618 897v7M618 910v1M618 932v1M619 877v1M620 930v1M620 933v1M621 899v1M621 910v27M622 884v3M622 888v9M623 904v6M624 881v15M624 901v11M625 889v1M625 891v3M625 895v8M625 914v1M626 887v1M626 889v2M626 894v1M627 887v1M627 889v1M628 888v1M628 891v1M629 888v1M629 891v1M629 912v9M629 923v1M630 930v1M631 876v1M631 894v27M632 876v1M632 896v16M632 913v7M634 893v1M634 904v1M635 904v5M636 902v1M636 925v1M636 932v1M636 935v1M637 890v1M637 920v5M637 926v6M637 933v4M639 911v1M639 913v8M640 899v5M640 906v6M640 913v24M641 892v1M641 905v5M642 896v21M642 918v12M643 902v1M643 905v5M644 896v6M644 903v1M644 919v8M645 888v5M646 890v1M646 892v1M646 908v20M647 881v9M647 891v1M647 894v13M647 923v1M648 908v1M649 905v4M650 906v5M650 915v1M650 924v1M651 896v2M651 903v11M652 892v3M653 935v1M654 892v1M654 916v3M656 886v3M657 900v3M657 904v3M658 900v7M659 891v4M659 898v1M660 898v1M663 908v1M663 920v9M663 930v2M663 933v4M664 888v1M664 906v23M664 930v7M665 888v1M665 920v17M666 898v1M666 910v2M666 918v12M666 931v4M666 936v1M667 923v7M667 931v4M667 936v1M669 879v1M669 918v18M670 879v1M670 894v1M670 900v1M670 918v10M676 886v1M676 902v2M676 905v1M676 910v1M677 886v1M677 903v1M677 905v1M677 912v2M677 918v1M678 893v9M678 903v1M678 905v7M678 918v1M679 903v1M679 905v3M680 894v12M680 907v1M681 887v15M682 893v13M683 887v3M685 892v2M686 891v1M686 926v3M687 910v3M688 888v1M688 890v2M688 893v12M688 906v3M688 910v27M689 885v3M689 890v2M689 893v2M690 891v5M691 896v5M691 902v10M692 897v7M692 905v29M693 913v2M694 891v5M694 897v2M694 901v18M694 920v11M695 885v1M695 896v1M695 899v1M696 885v1M696 895v5M696 901v2M697 914v13M697 929v8M698 883v1M698 902v8M699 912v3M699 916v1M700 889v7M700 897v7M700 905v6M700 921v10M702 889v1M702 910v16M702 927v1M702 929v1M703 889v1M703 929v8M704 903v7M707 881v1M709 916v1M709 918v18M711 892v1M711 894v20M711 915v22M712 893v10M712 904v12M712 917v2M713 894v3M713 916v1M715 900v2M717 884v1M717 902v8M717 911v20M718 879v7M721 932v1M722 932v1M723 878v6M724 864v1M724 893v1M724 895v1M725 896v13M726 882v2M727 884v1M727 909v4M728 890v12M730 881v1M730 893v1M730 895v1M730 899v3M731 881v1M731 900v1M732 905v12M732 918v1M734 902v1M734 924v6M735 899v3M735 933v1M736 894v1M736 933v1M738 882v1M738 913v7M740 919v9M741 911v3M741 915v20M741 936v1M742 894v1M742 927v1M742 929v8M743 927v1M743 929v8M744 887v1M747 889v1M747 918v2M747 921v14M748 889v1M748 926v10M749 926v11M752 901v3M753 879v1M753 888v8M753 897v1M754 879v1M755 882v1M755 892v5M755 935v1M756 870v1M756 895v2M756 898v10M756 927v1M757 894v1M757 896v13M758 896v13M762 931v1M764 869v1M766 931v6M767 880v1M767 882v2M768 881v1M768 925v3M768 929v8M769 881v2M771 892v1M771 928v1M772 896v6M773 927v8M774 877v16M774 894v5M775 935v2M778 882v7M778 891v7M779 925v12M780 882v9M785 876v1M786 876v1M787 897v4M789 883v1M790 873v1M790 903v1M790 908v3M790 912v4M790 928v1M791 873v1M791 888v13M791 902v4M791 931v6M792 877v1M797 926v9M798 911v1M799 911v5M799 917v2M801 929v8M802 925v1M802 927v4M803 923v14M804 923v7M806 932v5M808 899v2M809 870v1M809 892v1M810 867v2M810 870v1M810 892v1M811 874v1M812 870v2M812 874v1M813 874v1M813 888v1M813 903v2M813 908v8M813 928v2M814 875v2M814 878v11M815 884v12M819 877v5M820 903v1M820 908v1M821 886v11M832 921v6M834 883v1M834 925v3M834 929v1M835 883v3M837 883v5M837 897v5M841 886v1M841 889v1M843 875v6M843 882v1M845 891v4M845 896v3M848 875v1M855 889v1M856 872v1M856 874v1M856 890v2M857 872v1M857 874v1M861 880v4M861 885v2M861 888v11M863 882v2M866 920v10M881 874v1M883 876v5M894 930v7M900 924v13M918 882v1M919 869v1M919 876v1M919 883v1M920 869v1M920 876v1M921 878v5M923 877v2M933 868v1M934 868v1M966 870v4M968 869v2M982 875v1M991 864v2M991 867v7M992 866v1M993 871v3M1002 855v1M1003 831v1M1004 781v3M1004 785v2M1004 789v1M1004 792v2M1004 801v2M1004 806v3M1004 889v3M1004 900v1M1004 908v1M1004 916v1M1005 735v1M1005 770v1M1005 772v1M1005 781v3M1005 785v2M1005 789v1M1005 792v2M1005 801v2M1005 806v3M1006 147v1M1006 206v1M1006 235v1M1006 307v1M1006 320v1M1006 361v1M1006 370v1M1006 400v1M1006 406v1M1006 430v1M1006 435v1M1006 454v1M1006 459v1M1006 475v1M1006 479v1M1006 493v1M1006 497v1M1006 510v1M1006 513v1M1006 524v1M1006 527v1M1006 537v1M1006 540v1M1006 549v1M1006 551v1M1006 560v1M1006 562v1M1006 570v1M1006 572v1M1006 735v1M1007 147v1M1007 206v1M1007 235v1M1007 307v1M1007 320v1M1007 361v1M1007 370v1M1007 400v1M1007 406v1M1007 430v1M1007 435v1M1007 454v1M1007 459v1M1007 475v1M1007 479v1M1007 493v1M1007 497v1M1007 510v1M1007 513v1M1007 524v1M1007 527v1M1007 537v1M1007 540v1M1007 549v1M1007 551v1M1007 560v1M1007 562v1M1007 570v1M1007 572v1M1007 580v1M1007 582v1M1007 589v1M1007 591v1M1007 597v1M1007 599v1M1007 605v1M1007 607v1M1007 613v2M1007 620v2M1007 627v2M1008 773v1M1008 789v1M1008 793v1M1008 795v2M1008 809v1M1008 811v4M1009 773v1M1009 789v1M1009 793v1M1009 795v2M1009 809v1M1009 811v4M1010 827v3M1032 861v1M1057 856v1M1058 856v1M1086 864v1"/>
<path transform="translate(.5 0)" stroke="#ff0" stroke-opacity="0.959" d="M484 894v1M528 910v1M530 927v7M532 911v1M534 896v1M540 899v1M544 906v4M544 911v17M554 910v3M554 919v1M558 896v13M559 896v4M563 867v24M563 892v1M567 899v21M568 896v9M568 906v7M570 927v2M571 923v1M576 898v7M576 915v1M577 915v1M580 912v3M581 916v4M583 914v1M583 920v5M584 895v2M584 900v14M584 915v1M585 895v10M585 907v7M588 877v7M588 895v1M589 871v35M590 897v3M590 918v1M591 900v1M596 898v14M596 913v5M599 908v7M599 916v21M600 884v10M600 915v1M602 921v1M604 887v18M604 906v2M605 905v1M605 911v1M605 914v5M606 889v1M606 908v3M606 912v25M607 888v1M607 890v11M607 902v13M608 884v1M608 901v1M609 900v1M609 931v6M611 881v9M611 913v24M612 902v26M613 913v14M613 928v9M614 893v4M615 897v10M615 908v6M615 936v1M616 909v21M617 932v1M622 887v1M622 897v2M622 900v37M623 884v3M623 888v8M623 901v3M624 875v6M625 890v1M625 894v1M625 903v9M629 898v14M630 898v9M630 921v2M630 924v4M631 892v2M631 921v9M631 931v6M632 877v19M632 912v1M632 920v17M633 885v8M633 898v14M633 913v3M634 894v2M634 905v4M635 894v4M637 925v1M637 932v1M638 889v1M638 891v7M638 908v3M639 889v13M639 903v1M639 912v1M640 893v6M640 904v2M640 912v1M641 893v11M642 891v1M642 893v3M642 917v1M643 904v1M643 910v7M643 918v12M644 902v1M644 927v10M645 919v15M646 894v14M647 890v1M647 892v2M648 912v5M648 922v1M648 924v13M649 917v5M650 905v1M650 911v4M651 914v1M651 916v8M651 925v12M652 905v15M653 890v3M653 904v16M654 887v5M654 919v16M654 936v1M655 886v3M655 930v6M656 919v11M657 882v9M657 892v2M657 903v1M658 882v1M659 910v19M659 930v3M659 934v3M660 899v11M661 885v6M661 926v11M662 891v15M662 926v6M662 933v4M663 929v1M663 932v1M664 904v2M664 929v1M665 896v2M665 899v11M665 912v8M666 930v1M666 935v1M667 919v1M667 930v1M667 935v1M668 901v18M668 923v13M669 885v9M669 895v5M669 901v17M669 936v1M670 913v2M670 916v2M670 928v8M671 913v2M671 916v2M671 936v1M672 929v8M673 895v16M673 930v7M674 910v2M674 915v8M675 913v10M676 904v1M677 904v1M678 902v1M678 904v1M678 914v4M679 894v9M679 904v1M679 908v2M679 911v7M680 906v1M680 913v17M681 884v3M681 902v4M681 907v3M681 911v10M681 922v4M681 927v3M682 884v6M682 891v2M682 916v5M682 922v4M682 927v10M683 890v16M683 922v4M684 881v8M684 890v25M684 922v4M685 887v2M685 890v1M685 914v7M685 922v4M686 894v15M687 909v1M687 914v15M688 892v1M688 905v1M688 909v1M689 888v2M689 892v1M689 895v10M689 906v31M690 886v3M690 890v1M690 896v5M690 902v3M690 906v7M690 914v23M691 886v1M691 888v4M691 894v2M691 901v1M691 912v1M691 914v20M692 884v3M692 888v4M692 894v3M692 904v1M693 884v6M693 891v1M693 893v11M693 905v8M693 915v4M693 920v11M694 890v1M694 896v1M694 899v2M694 919v1M695 900v1M695 903v12M696 900v1M696 911v16M697 902v7M697 910v3M698 910v3M698 929v8M699 882v1M699 884v12M699 897v7M699 905v7M699 915v1M700 896v1M700 904v1M702 903v1M702 905v5M702 926v1M702 928v1M702 930v7M703 890v14M703 905v11M703 917v3M703 928v1M704 875v15M704 894v9M704 910v6M704 917v11M705 875v9M705 894v7M705 903v15M705 921v1M706 888v13M706 926v3M707 888v21M708 877v4M708 882v11M708 894v1M708 896v21M708 918v8M709 879v14M709 894v1M709 896v3M709 900v16M709 917v1M709 936v1M710 894v5M710 900v14M710 915v13M711 881v4M711 886v3M711 890v2M711 914v1M712 877v4M712 903v1M712 916v1M713 881v11M713 904v4M714 885v3M714 889v5M714 897v11M715 872v2M715 902v7M716 874v3M716 878v1M716 900v10M716 911v20M717 910v1M718 874v5M718 902v26M718 929v4M718 934v3M719 871v6M720 871v4M720 931v6M721 875v4M721 880v4M721 916v15M722 904v17M723 877v1M723 904v5M723 914v7M724 877v1M724 879v14M724 894v1M724 909v5M725 865v12M725 909v3M726 884v1M726 912v11M727 885v22M727 908v1M727 913v2M727 920v4M728 903v4M728 908v4M728 913v2M728 920v1M729 896v4M729 919v2M730 883v10M730 894v1M730 902v12M730 915v2M730 918v1M731 883v9M731 899v1M731 901v4M732 885v7M732 917v1M733 885v12M733 902v1M733 906v11M733 918v18M734 906v1M734 908v2M734 911v7M734 930v6M735 913v1M735 915v4M735 920v4M736 895v7M736 925v6M737 879v3M737 883v3M737 913v12M738 886v1M739 887v5M739 910v2M739 913v13M740 865v24M740 910v1M741 887v2M741 914v1M741 935v1M742 896v1M742 898v7M742 906v6M742 928v1M743 896v3M743 906v10M743 917v6M743 928v1M744 894v4M744 917v20M745 874v13M745 888v10M745 936v1M746 912v2M747 905v6M747 920v1M747 935v2M748 899v6M748 918v3M749 899v7M750 899v1M750 922v15M751 852v20M751 873v7M752 852v20M752 873v8M752 899v2M752 929v2M753 896v1M753 898v5M753 929v2M754 882v1M754 892v11M754 904v9M754 917v4M754 922v13M754 936v1M755 897v1M755 909v12M755 922v2M756 894v1M756 897v1M756 915v9M757 895v1M758 895v1M759 884v11M760 884v10M760 933v4M761 877v9M761 918v3M761 922v7M762 870v7M762 920v1M762 922v1M762 924v5M763 868v1M763 870v10M763 924v7M763 932v2M764 924v10M765 890v8M765 931v6M766 880v4M767 881v1M767 915v13M767 929v8M768 883v7M768 903v9M768 913v1M768 915v10M768 928v1M769 880v1M769 907v5M769 913v1M769 915v14M770 886v5M770 929v2M771 896v10M771 923v2M772 923v1M773 871v22M773 894v8M774 893v1M774 922v2M774 925v12M775 897v2M775 922v2M775 925v7M776 897v1M776 931v1M777 898v11M777 912v16M777 929v2M778 912v8M779 882v7M779 891v11M780 874v8M780 891v9M780 901v1M780 928v9M781 862v15M781 928v9M782 873v4M782 917v20M783 873v13M784 925v12M785 918v9M786 883v19M786 927v4M787 925v6M788 890v11M788 928v9M789 904v2M789 907v21M790 884v12M790 897v1M790 900v3M790 911v1M791 901v1M792 888v13M792 902v4M792 927v10M793 876v1M793 878v8M794 877v9M795 877v10M795 918v1M796 874v13M796 915v11M797 877v13M797 906v6M797 913v3M798 865v12M798 906v5M798 912v4M798 917v2M799 865v13M799 879v2M799 916v1M800 884v5M800 892v1M800 912v12M800 925v4M801 893v5M802 884v8M802 893v4M802 898v1M802 900v6M802 926v1M803 878v6M803 903v4M804 930v7M805 884v6M805 908v10M805 932v5M806 888v1M807 889v10M809 894v7M809 927v7M809 935v2M810 894v7M810 902v10M810 913v1M810 936v1M811 886v27M812 884v2M812 888v28M814 874v1M814 877v1M814 909v19M815 874v3M815 878v6M815 896v4M815 907v10M815 918v8M815 928v9M816 875v12M817 875v2M818 867v1M818 919v9M819 868v9M819 904v2M819 919v8M820 882v2M820 886v16M820 906v2M820 927v10M821 878v6M821 885v1M822 878v8M823 877v9M824 885v10M825 885v7M826 885v7M826 933v4M827 885v2M827 917v4M827 922v6M828 886v1M828 926v1M829 879v7M829 927v3M830 868v11M831 900v4M831 905v5M831 911v1M831 927v10M832 871v3M833 881v2M833 884v6M834 886v4M834 891v3M834 928v1M835 870v13M836 870v12M837 882v1M838 895v3M839 891v2M839 933v1M839 935v1M840 889v1M841 887v2M842 869v12M842 882v1M843 881v1M844 891v4M844 896v3M844 927v5M845 895v1M845 902v13M846 875v6M846 907v8M847 875v6M848 880v2M848 887v2M848 934v3M849 871v4M849 876v4M850 866v16M851 852v20M851 906v19M851 926v11M852 872v11M853 883v9M854 882v7M854 890v1M854 900v3M854 906v9M854 916v8M854 926v5M854 932v1M855 891v1M855 911v16M855 928v6M856 892v1M856 911v1M856 928v2M857 902v1M858 887v7M859 876v11M860 896v3M860 926v1M860 928v8M861 884v1M861 887v1M862 873v9M862 926v11M864 884v3M864 888v1M865 881v8M865 936v1M866 884v3M866 903v6M866 910v8M866 919v1M866 930v7M867 874v10M867 920v12M868 874v17M868 920v2M868 930v2M869 879v11M869 920v17M870 879v10M872 889v1M872 933v4M873 882v4M873 887v3M873 933v3M874 869v13M874 904v2M875 876v6M876 876v6M876 925v6M876 932v5M877 873v18M878 891v1M880 875v2M882 871v5M884 882v3M885 882v1M886 883v1M887 895v1M888 873v1M888 875v7M889 868v5M890 880v6M890 926v2M890 929v8M891 883v11M892 882v1M893 869v10M894 868v1M896 876v3M897 875v4M898 881v3M899 883v1M899 926v11M900 883v1M902 879v1M903 873v6M904 876v3M905 876v1M906 877v2M907 879v1M908 869v2M908 931v6M909 869v2M910 871v9M910 935v2M911 871v2M911 874v2M911 931v4M912 868v5M912 874v2M913 864v4M914 864v15M915 879v9M916 867v1M917 867v4M918 884v4M919 930v7M920 878v5M920 924v5M922 881v3M923 930v6M924 876v3M926 876v1M927 877v17M928 882v2M929 880v2M930 874v6M931 868v12M932 880v10M933 888v2M934 871v9M935 871v3M936 870v4M936 933v4M937 875v2M937 878v6M938 886v1M939 876v4M940 876v4M941 870v3M942 867v3M943 867v4M944 870v1M945 871v3M945 927v3M945 931v6M946 865v2M946 928v3M947 862v3M947 931v6M948 879v1M948 927v2M948 930v3M949 865v14M949 926v2M949 930v3M950 865v12M951 876v1M952 869v3M953 869v1M954 869v1M955 874v2M955 877v2M956 874v2M956 877v8M956 886v1M957 881v1M958 873v1M959 873v1M960 875v1M961 869v4M962 861v8M962 934v1M963 861v10M964 863v8M965 874v4M965 926v3M966 864v6M966 927v6M966 934v1M967 864v7M969 860v3M970 857v6M971 855v11M972 860v6M972 935v2M973 866v3M973 870v1M973 928v3M974 871v13M977 866v5M978 865v6M979 857v12M980 860v9M981 867v5M982 882v7M983 867v1M984 867v1M985 866v17M986 866v3M987 869v4M988 870v7M989 879v1M990 874v5M991 866v1M992 871v3M992 933v3M994 865v1M995 859v6M996 860v5M997 864v1M998 874v1M1000 866v3M1001 862v4M1002 856v2M1003 925v12M1004 780v1M1004 784v1M1005 771v1M1005 780v1M1005 784v1M1008 788v1M1008 794v1M1008 810v1M1008 823v10M1009 788v1M1009 794v1M1009 810v1M1009 897v13M1011 856v3M1013 865v3M1014 865v4M1015 865v1M1016 853v12M1017 875v3M1018 876v1M1018 878v4M1019 871v5M1020 866v5M1022 864v1M1023 870v1M1024 871v5M1025 865v2M1026 867v2M1027 875v1M1028 870v2M1029 868v1M1030 866v1M1031 866v1M1032 865v3M1033 852v6M1034 858v3M1035 866v2M1036 868v4M1037 872v2M1038 863v7M1039 856v4M1040 860v8M1041 870v2M1041 873v2M1042 872v3M1043 873v2M1044 867v6M1045 866v1M1046 872v3M1047 864v4M1047 869v3M1048 864v4M1048 869v4M1050 858v5M1051 855v3M1052 867v3M1053 867v3M1054 870v1M1055 868v3M1056 866v2M1059 872v3M1060 871v1M1061 861v8M1062 858v3M1063 864v2M1064 858v3M1065 854v2M1066 854v9M1067 863v4M1068 863v11M1069 870v3M1070 865v1M1071 864v1M1072 868v1M1073 866v3M1074 864v2M1075 856v14M1075 871v1M1076 856v16M1077 867v5M1078 870v2M1079 863v7M1080 860v3M1081 860v4M1082 864v9M1083 865v2M1084 857v3M1085 857v3M1086 865v1M1087 869v2M1088 869v1M1089 859v6M1090 859v2M1091 863v3M1092 863v1M1093 860v4M1094 861v5M1095 860v1M1096 851v9M1097 855v9M1098 855v4M1099 858v1M1100 857v1M1102 857v6M1103 854v7M1104 854v7M1105 858v4M1106 852v6M1107 852v15M1108 857v4M1109 857v4M1110 851v11M1111 851v9M1112 857v3M1113 858v8M1114 858v7M1115 857v1M1116 857v1M1120 860v1M1121 861v4M1122 853v8M1123 853v8M1124 865v6M1125 862v2M1126 862v2M1127 862v4M1128 855v6M1129 858v3M1130 858v1M1131 858v1M1132 850v4M1133 849v1M1134 860v4M1135 857v1M1136 857v1M1138 863v2M1139 865v1M1140 857v6M1141 857v6M1143 856v1M1144 850v6M1145 854v7M1146 854v6M1147 857v3M1148 857v3M1149 852v6M1150 844v14M1151 859v4M1152 854v11M1153 850v4M1154 846v9M1155 855v3M1156 854v5M1157 854v1M1158 859v2M1159 859v2M1160 859v6M1164 858v2M1165 860v8M1166 864v5M1167 864v5M1168 853v7M1168 861v1M1169 856v4M1170 859v1M1171 859v7M1172 864v2M1174 858v3M1175 854v7M1176 861v4M1177 856v9M1178 849v7M1179 860v3M1181 864v2M1182 854v12M1183 854v4M1184 860v1M1185 860v1M1186 862v1M1187 858v5M1188 855v3M1189 855v1M1190 854v1M1191 854v6M1192 861v2M1193 858v4M1194 856v2M1195 856v7M1199 852v5M1200 857v4M1201 862v7M1202 865v2M1203 857v5M1204 861v1M1205 852v2M1206 852v2M1208 857v7M1209 857v1M1210 852v6M1211 852v6M1212 853v1M1213 853v1M1214 856v4M1215 856v6M1216 856v5M1217 853v3M1218 853v4M1219 850v7M1220 851v5M1221 851v3M1222 844v10M1223 849v4M1224 853v1M1225 854v4M1226 850v8M1227 859v2M1228 857v2M1229 854v3M1230 851v5M1231 853v3M1232 853v1M1233 854v2M1234 858v2M1235 850v9M1237 856v5M1238 856v1M1239 857v1M1240 859v4M1241 857v4M1242 857v3M1243 852v5M1244 848v4M1245 851v4M1246 859v4M1247 859v1M1248 856v2M1250 859v2M1251 859v1M1252 851v8M1253 854v2M1254 853v1M1255 852v1M1256 852v3M1258 850v5M1259 856v1M1261 854v1M1262 855v2M1263 845v13M1264 845v8M1266 857v1M1267 862v1M1268 847v7M1269 847v4M1271 858v2M1277 855v2M1278 854v2M1279 853v1M1280 855v7M1282 854v1M1283 856v1M1285 855v1M1286 853v3M1287 851v2M1288 853v1M1289 854v1M1290 853v1M1291 853v2M1293 842v13M1294 851v4M1296 851v3M1297 847v4M1298 851v1M1300 851v7M1301 856v3M1302 855v1M1303 856v2M1304 856v1M1305 853v3M1306 855v1M1307 856v1M1308 858v1M1309 854v4M1311 850v1M1312 851v3M1314 856v2M1316 856v2M1317 853v5M1318 851v2M1319 850v1M1320 850v10M1322 848v2M1323 849v5M1324 850v4M1325 853v4M1326 855v1M1327 852v3M1328 852v1M1329 854v3M1330 857v1M1331 852v3M1333 855v2M1334 857v1M1336 849v2M1337 849v2M1338 851v7M1339 851v6M1340 854v3M1341 854v3M1342 852v6M1343 852v3M1344 855v2M1345 857v4M1346 852v1M1347 852v1M1348 853v1M1350 856v1M1351 849v5M1352 848v1M1353 851v2M1354 854v1M1355 850v5M1357 850v1M1358 849v5M1359 849v6M1360 850v5M1361 850v6M1362 848v1M1363 848v4M1364 851v1M1365 851v2M1366 853v3M1367 848v6M1368 851v3M1369 851v1M1370 849v2M1371 851v6M1372 857v2M1373 853v2M1374 848v7M1375 848v6M1376 847v7M1377 855v2M1378 855v1M1379 854v1M1380 853v1M1381 853v1M1382 844v7M1383 844v7M1384 853v3M1385 852v3M1386 852v2M1387 851v3M1388 851v3M1389 846v2M1390 846v2M1391 852v2M1392 853v3M1393 852v1M1394 852v1M1396 854v2M1397 851v2M1398 851v2M1399 851v5M1400 850v2M1402 849v1M1403 846v1M1406 850v1M1407 851v1M1408 853v2M1409 847v6M1410 847v2M1411 852v2M1412 852v2M1413 853v2M1414 846v5M1415 846v1M1416 847v3M1417 844v3M1418 844v3M1419 847v2M1420 845v4M1421 851v5M1422 851v2M1423 849v1M1424 848v2M1425 849v2M1426 851v1M1427 851v1M1428 846v2M1429 846v2M1430 851v1M1431 850v1M1432 850v3M1433 849v2M1434 848v1M1435 840v4M1436 840v8M1437 847v1M1438 847v1M1439 848v1M1440 847v1M1441 848v2M1442 848v3M1443 847v3M1444 846v1M1446 846v3M1448 847v2M1450 844v3M1451 847v1M1452 850v1M1453 849v1M1454 848v3M1455 848v2M1456 847v1M1457 847v1M1458 851v2M1463 852v1M1464 855v1M1465 850v3M1466 847v2M1467 847v3M1468 854v1"/>
<path transform="translate(.5 0)" stroke="#ff0" stroke-opacity="1.0" d="M544 910v1M559 900v21M563 891v1M568 905v1M570 921v6M584 897v3M584 914v1M585 905v2M589 906v13M590 900v18M596 912v1M599 915v1M601 914v1M602 914v1M604 905v1M606 911v1M607 889v1M607 901v1M611 902v11M613 927v1M614 897v40M615 907v1M617 909v21M622 899v1M623 887v1M623 896v5M624 896v5M630 907v14M630 923v1M631 930v1M633 893v5M633 912v1M634 896v8M635 898v6M638 890v1M638 898v10M639 902v1M639 904v7M641 904v1M642 892v1M643 917v1M644 904v15M645 893v26M646 893v1M648 909v3M648 917v5M648 923v1M649 909v6M651 898v5M651 915v1M651 924v1M652 895v10M653 893v11M654 893v23M654 935v1M655 889v41M656 889v30M657 891v1M657 894v6M658 883v17M659 929v1M659 933v1M660 910v27M661 891v35M662 906v20M662 932v1M665 898v1M665 910v2M667 920v3M668 919v4M668 936v1M669 894v1M669 900v1M670 915v1M671 915v1M671 918v18M672 909v20M673 911v19M674 912v3M675 910v3M678 912v2M679 910v1M680 908v5M681 906v1M681 910v1M681 921v1M681 926v1M682 890v1M682 906v10M682 921v1M682 926v1M683 906v16M684 889v1M684 915v7M685 889v1M685 891v1M685 894v20M685 921v1M686 909v17M686 929v8M687 913v1M687 929v8M689 905v1M690 889v1M690 901v1M690 905v1M690 913v1M691 887v1M691 892v2M691 913v1M692 887v1M692 892v2M693 890v1M693 892v1M693 904v1M693 919v1M696 903v8M697 909v1M699 883v1M699 896v1M699 904v1M700 911v10M701 911v26M702 904v1M703 904v1M703 916v1M703 920v8M704 890v4M704 916v1M705 884v10M705 901v2M705 918v3M706 901v25M707 909v28M708 881v1M708 893v1M708 895v1M708 917v1M708 926v11M709 893v1M709 895v1M709 899v1M710 899v1M710 914v1M710 928v9M711 885v1M711 889v1M712 881v12M713 892v2M713 897v7M714 881v4M714 888v1M715 874v26M716 877v1M716 879v21M716 910v1M717 886v16M718 886v16M718 928v1M718 933v1M719 877v60M720 875v56M721 879v1M721 884v32M722 884v20M723 884v20M723 909v5M724 878v1M725 864v1M725 877v19M726 885v27M727 907v1M727 915v5M728 907v1M728 912v1M728 915v5M729 900v19M730 896v3M730 914v1M730 917v1M731 892v7M732 892v13M733 897v5M733 917v1M733 936v1M734 907v1M734 910v1M734 918v6M734 936v1M735 902v11M735 914v1M735 919v1M736 902v23M737 882v1M737 886v27M738 887v26M739 892v18M739 912v1M740 889v21M741 889v22M742 897v1M742 905v1M742 912v15M743 899v7M743 916v1M743 923v4M744 898v19M745 887v1M745 898v38M746 914v23M747 911v7M748 905v13M748 921v5M749 906v20M750 900v22M751 872v1M751 880v57M752 872v1M752 881v18M752 904v25M753 903v26M754 883v9M754 903v1M754 913v4M754 921v1M754 935v1M755 883v9M755 908v1M755 921v1M756 908v7M757 909v28M758 909v28M759 895v42M760 894v39M761 886v32M761 921v1M762 877v43M762 921v1M762 923v1M763 869v1M763 880v44M763 931v1M764 890v34M765 898v33M766 884v47M767 884v31M767 928v1M768 890v13M768 912v1M768 914v1M769 883v24M769 912v1M769 914v1M770 891v38M771 906v17M772 902v21M772 924v1M773 893v1M773 902v25M774 899v23M774 924v1M775 899v23M775 924v1M776 898v33M777 909v3M777 928v1M778 889v2M778 898v14M779 889v2M779 902v23M780 900v1M780 902v26M781 877v51M782 877v40M783 886v51M784 893v32M785 893v25M786 902v25M786 931v6M787 901v24M787 931v6M788 901v27M789 884v20M789 906v1M790 896v1M790 898v2M791 906v25M792 901v1M792 906v21M793 877v1M793 886v51M794 886v51M795 887v31M796 887v28M797 890v16M797 912v1M797 916v10M798 877v29M798 916v1M799 878v1M799 881v30M800 889v3M800 893v19M800 924v1M801 898v31M802 892v1M802 897v1M802 899v1M802 906v19M803 884v19M803 907v16M804 884v39M805 890v18M805 918v14M806 889v43M807 899v38M808 901v36M809 901v26M809 934v1M810 901v1M810 912v1M810 914v22M811 913v24M812 886v2M812 916v21M813 884v4M813 889v14M813 905v3M813 916v12M814 889v20M815 877v1M815 900v7M815 917v1M815 926v2M816 887v41M817 877v51M818 868v51M819 882v22M819 906v13M820 884v2M820 909v18M821 884v1M821 897v40M822 886v51M823 886v51M824 895v42M825 892v45M826 892v41M827 887v30M827 921v1M828 887v39M829 886v41M830 879v58M831 871v29M831 904v1M831 910v1M831 912v15M832 874v47M833 883v1M833 890v31M834 890v1M834 894v31M835 869v1M835 886v51M836 869v1M836 882v55M837 888v9M837 902v35M838 894v1M838 898v39M839 893v40M839 934v1M840 888v1M840 890v47M841 890v47M842 881v1M842 883v54M843 883v54M844 895v1M844 899v28M844 932v5M845 899v3M845 915v22M846 881v26M846 915v22M847 881v56M848 882v5M848 889v45M849 875v1M849 880v57M850 882v55M851 872v34M851 925v1M852 883v54M853 892v45M854 889v1M854 891v9M854 903v3M854 915v1M854 924v2M854 931v1M855 892v19M855 927v1M856 893v18M856 912v16M857 903v34M858 894v43M859 887v50M860 899v27M860 927v1M861 899v27M862 882v44M863 884v53M864 887v1M864 889v48M865 889v47M866 887v16M866 909v1M866 918v1M867 884v36M868 891v29M868 922v8M869 890v30M870 889v48M871 889v48M872 890v43M873 886v1M873 890v43M873 936v1M874 882v22M874 906v31M875 882v55M876 882v43M876 931v1M877 891v46M878 892v45M879 892v45M880 877v60M881 875v62M882 876v61M883 881v56M884 885v52M885 883v54M886 884v53M887 896v41M888 874v1M888 882v55M889 873v64M890 886v40M890 928v1M891 894v43M892 883v54M893 879v58M894 869v61M895 874v63M896 879v58M897 879v58M898 884v53M899 884v42M900 884v40M901 880v57M902 880v57M903 879v58M904 879v58M905 877v60M906 879v58M907 880v57M908 871v60M909 871v66M910 880v55M911 873v1M911 876v55M912 873v1M912 876v61M913 868v69M914 879v58M915 888v49M916 868v69M917 871v66M918 888v49M919 884v46M920 883v41M921 883v54M922 884v53M923 879v51M924 879v58M925 876v61M926 877v60M927 894v43M928 884v53M929 882v55M930 880v57M931 880v57M932 890v47M933 890v47M934 880v57M935 874v63M936 874v59M937 877v1M937 884v53M938 887v50M939 880v57M940 880v57M941 873v64M942 870v67M943 871v66M944 871v66M945 874v53M945 930v1M946 867v61M947 865v66M948 880v47M948 929v1M949 879v47M949 928v2M950 877v60M951 877v60M952 872v65M953 870v67M954 870v67M955 876v1M955 879v58M956 876v1M956 885v1M956 887v50M957 882v55M958 874v63M959 874v63M960 876v61M961 873v64M962 869v65M963 871v66M964 871v66M965 878v48M966 874v53M966 933v1M967 871v66M968 871v66M969 863v74M970 863v74M971 866v71M972 866v69M973 869v1M973 871v57M974 884v53M975 872v65M976 872v65M977 871v66M978 871v66M979 869v68M980 869v68M981 872v65M982 889v48M983 868v69M984 868v69M985 883v54M986 869v68M987 873v64M988 877v60M989 880v57M990 879v58M991 874v63M992 874v59M992 936v1M993 874v63M994 866v71M995 865v72M996 865v72M997 865v72M998 875v62M999 872v65M1000 869v68M1001 866v71M1002 858v79M1003 832v93M1004 787v2M1004 809v80M1005 787v2M1005 809v22M1008 797v12M1008 815v8M1009 797v12M1009 815v82M1010 830v107M1011 859v78M1012 859v78M1013 868v69M1014 869v68M1015 866v71M1016 865v72M1017 878v59M1018 877v1M1018 882v55M1019 876v61M1020 871v66M1021 864v73M1022 865v72M1023 871v66M1024 876v61M1025 867v70M1026 869v68M1027 876v61M1028 872v65M1029 869v68M1030 867v70M1031 867v70M1032 868v69M1033 858v79M1034 861v76M1035 868v69M1036 872v65M1037 874v63M1038 870v67M1039 860v77M1040 868v69M1041 872v1M1041 875v62M1042 875v62M1043 875v62M1044 873v64M1045 867v70M1046 875v62M1047 868v1M1047 872v65M1048 868v1M1048 873v64M1049 873v64M1050 863v74M1051 858v79M1052 870v67M1053 870v67M1054 871v66M1055 871v66M1056 868v69M1057 866v71M1058 866v71M1059 871v1M1059 875v62M1060 872v65M1061 869v68M1062 861v76M1063 866v71M1064 861v76M1065 856v81M1066 863v74M1067 867v70M1068 874v63M1069 873v64M1070 866v71M1071 865v72M1072 869v68M1073 869v68M1074 866v71M1075 870v1M1075 872v65M1076 872v65M1077 872v65M1078 872v65M1079 870v67M1080 863v74M1081 864v73M1082 873v64M1083 867v70M1084 860v77M1085 860v77M1086 866v71M1087 871v66M1088 870v67M1089 865v72M1090 861v76M1091 866v71M1092 864v73M1093 864v73M1094 866v71M1095 861v76M1096 860v77M1097 864v73M1098 859v78M1099 859v78M1100 858v79M1101 857v80M1102 863v74M1103 861v76M1104 861v76M1105 862v75M1106 858v79M1107 867v70M1108 861v76M1109 861v76M1110 862v75M1111 860v77M1112 860v77M1113 866v71M1114 865v72M1115 858v79M1116 858v79M1117 855v82M1118 855v82M1119 861v76M1120 861v76M1121 865v72M1122 861v76M1123 861v76M1124 871v66M1125 864v73M1126 864v73M1127 866v71M1128 861v76M1129 861v76M1130 859v78M1131 859v78M1132 854v83M1133 850v87M1134 864v73M1135 858v79M1136 858v79M1137 863v74M1138 865v72M1139 866v71M1140 863v74M1141 863v74M1142 864v73M1143 857v80M1144 856v81M1145 861v76M1146 860v77M1147 860v77M1148 860v77M1149 858v79M1150 858v79M1151 863v74M1152 865v72M1153 854v83M1154 855v82M1155 858v79M1156 859v78M1157 855v82M1158 861v76M1159 861v76M1160 865v72M1161 862v75M1162 862v75M1163 858v79M1164 860v77M1165 868v69M1166 869v68M1167 869v68M1168 860v1M1168 862v75M1169 860v77M1170 860v77M1171 866v71M1172 866v71M1173 864v73M1174 861v76M1175 861v76M1176 865v72M1177 865v72M1178 856v81M1179 863v74M1180 864v73M1181 866v71M1182 866v71M1183 858v79M1184 861v76M1185 861v76M1186 863v74M1187 863v74M1188 858v79M1189 856v81M1190 855v82M1191 860v77M1192 863v74M1193 862v75M1194 858v79M1195 863v74M1196 854v83M1197 854v83M1198 852v85M1199 857v80M1200 861v76M1201 869v68M1202 867v70M1203 862v75M1204 862v75M1205 854v83M1206 854v83M1207 863v74M1208 864v73M1209 858v79M1210 858v79M1211 858v79M1212 854v83M1213 854v83M1214 860v77M1215 862v75M1216 861v76M1217 856v81M1218 857v80M1219 857v80M1220 856v81M1221 854v83M1222 854v83M1223 853v84M1224 854v83M1225 858v79M1226 858v79M1227 861v76M1228 859v78M1229 857v80M1230 856v81M1231 856v81M1232 854v83M1233 856v81M1234 860v77M1235 859v78M1236 850v87M1237 861v76M1238 857v80M1239 858v79M1240 863v74M1241 861v76M1242 860v77M1243 857v80M1244 852v85M1245 855v82M1246 863v74M1247 860v77M1248 858v79M1249 858v79M1250 861v76M1251 860v77M1252 859v78M1253 856v81M1254 854v83M1255 853v84M1256 855v82M1257 850v87M1258 855v82M1259 857v80M1260 854v83M1261 855v82M1262 857v80M1263 858v79M1264 853v84M1265 853v84M1266 858v79M1267 863v74M1268 854v83M1269 851v86M1270 855v82M1271 860v77M1272 861v76M1273 855v82M1274 855v82M1275 853v84M1276 853v84M1277 857v80M1278 856v81M1279 854v83M1280 862v75M1281 855v82M1282 855v82M1283 857v80M1284 856v81M1285 856v81M1286 856v81M1287 853v84M1288 854v83M1289 855v82M1290 854v83M1291 855v82M1292 855v82M1293 855v82M1294 855v82M1295 855v82M1296 854v83M1297 851v86M1298 852v85M1299 851v86M1300 858v79M1301 859v78M1302 856v81M1303 858v79M1304 857v80M1305 856v81M1306 856v81M1307 857v80M1308 859v78M1309 858v79M1310 853v84M1311 851v86M1312 854v83M1313 856v81M1314 858v79M1315 858v79M1316 858v79M1317 858v79M1318 853v84M1319 851v86M1320 860v77M1321 850v87M1322 850v87M1323 854v83M1324 854v83M1325 857v80M1326 856v81M1327 855v82M1328 853v84M1329 857v80M1330 858v79M1331 855v82M1332 855v82M1333 857v80M1334 858v79M1335 855v82M1336 851v86M1337 851v86M1338 858v79M1339 857v80M1340 857v80M1341 857v80M1342 858v79M1343 855v82M1344 857v80M1345 861v76M1346 853v84M1347 853v84M1348 854v83M1349 856v81M1350 857v80M1351 854v83M1352 849v88M1353 853v84M1354 855v82M1355 855v82M1356 850v87M1357 851v86M1358 854v83M1359 855v82M1360 855v82M1361 856v81M1362 849v88M1363 852v85M1364 852v85M1365 853v84M1366 856v81M1367 854v83M1368 854v83M1369 852v85M1370 851v86M1371 857v80M1372 859v78M1373 855v82M1374 855v82M1375 854v83M1376 854v83M1377 857v80M1378 856v81M1379 855v82M1380 854v83M1381 854v83M1382 851v86M1383 851v86M1384 856v81M1385 855v82M1386 854v83M1387 854v83M1388 854v83M1389 848v89M1390 848v89M1391 854v83M1392 856v81M1393 853v84M1394 853v84M1395 853v84M1396 856v81M1397 853v84M1398 853v84M1399 856v81M1400 852v85M1401 850v87M1402 850v87M1403 847v90M1404 847v90M1405 853v84M1406 851v86M1407 852v85M1408 855v82M1409 853v84M1410 849v88M1411 854v83M1412 854v83M1413 855v82M1414 851v86M1415 847v90M1416 850v87M1417 847v90M1418 847v90M1419 849v88M1420 849v88M1421 856v81M1422 853v84M1423 850v87M1424 850v87M1425 851v86M1426 852v85M1427 852v85M1428 848v89M1429 848v89M1430 852v85M1431 851v86M1432 853v84M1433 851v86M1434 849v88M1435 844v93M1436 848v89M1437 848v89M1438 848v89M1439 849v88M1440 848v89M1441 850v87M1442 851v86M1443 850v87M1444 847v90M1445 846v91M1446 849v88M1447 847v90M1448 849v88M1449 849v88M1450 847v90M1451 848v89M1452 851v86M1453 850v87M1454 851v86M1455 850v87M1456 848v89M1457 848v89M1458 853v84M1459 849v88M1460 849v88M1461 849v88M1462 850v87M1463 853v84M1464 856v81M1465 853v84M1466 849v88M1467 850v87M1468 855v82"/>
</g>
<g class="px"><rect x="1351" y="932" width="1" height="5" fill="#000"/><rect x="81.5" y="120.5" width="1406" height="817" fill="none" stroke="#cdcdcd"/><path d="M178.5 121v816M82 906.5h1405" stroke="#008000" stroke-opacity=".62" fill="none"/></g>
<rect x="1305.75" y="129.75" width="149" height="26" rx="3" ry="3" fill="none" stroke="#fff" stroke-width="1.5"/><path d="M1373 130h79.5a2.5 2.5 0 0 1 2.5 2.5v20.5a2.5 2.5 0 0 1-2.5 2.5h-79.5z" fill="#fff"/><text x="1309.2" y="148.3" style="font-family:'DejaVu Sans Light','DejaVu Sans',sans-serif;font-weight:200" font-size="20.5" fill="#fff" textLength="61.5" lengthAdjust="spacingAndGlyphs">Quant</text><text x="1374.3" y="148.3" font-size="22" font-weight="bold" fill="#000" stroke="#fff" stroke-width=".3" textLength="78.5" lengthAdjust="spacingAndGlyphs">Asylum</text>
<g font-size="13" fill="#fff" stroke="#fff" stroke-width=".22">
<text x="22.39" y="23" letter-spacing="0.124" word-spacing="0.40">FFT: 256k</text>
<text x="22.31" y="38" letter-spacing="0.144" word-spacing="0.40">Avg: ---</text>
<text x="24.03" y="53" letter-spacing="-0.082" word-spacing="0.40">Res: 183 mHz</text>
<text x="22.55" y="68" letter-spacing="0.100" word-spacing="0.40">Fs: 48,0 KHz</text>
<text x="24.56" y="83" letter-spacing="-0.203" word-spacing="0.40">Win: Hann</text>
<text x="23.77" y="98" letter-spacing="0.009" word-spacing="0.40">Weight: None</text>
<text x="133.04" y="23" letter-spacing="0.008" word-spacing="0.40">Meas Start: 20,0 Hz</text>
<text x="133.04" y="38" letter-spacing="0.126" word-spacing="0.40">Meas Stop:20,0 KHz</text>
<text x="133.03" y="53" letter-spacing="0.061" word-spacing="0.40">RMS L: -3,2 dBFS</text>
<text x="322.55" y="23" letter-spacing="0.085" word-spacing="0.40">Peak L: -3,83 dBFS</text>
<text x="322.55" y="53" letter-spacing="0.063" word-spacing="0.40">Peak L: 12,79 Vrms</text>
<text x="504.75" y="23" fill="#808080" stroke="#808080" letter-spacing="-0.064" word-spacing="0.40" xml:space="preserve">Gen 1: 19,04882 KHz @ -32,00  dBFS</text>
<text x="504.75" y="38" fill="#808080" stroke="#808080" letter-spacing="-0.033" word-spacing="0.40" xml:space="preserve">Gen 2:6,000000 KHz @ -14,87  dBFS</text>
<text x="502.62" y="53" letter-spacing="0.068" word-spacing="0.40">SNR L: 90,9 dB</text>
<text x="294.67" y="238" font-size="14" stroke="none" letter-spacing="-0.036">RANGE</text>
<text x="83.99" y="287" font-size="14" stroke="none" letter-spacing="0.114">Atten: 20 dB</text>
<text x="1328.30" y="175" font-size="16.2" stroke="none" letter-spacing="0.025">QA401 v1.924</text>
<text x="1316.87" y="923.5" font-size="12" fill="#fffff0" stroke="none" letter-spacing="0.118" xml:space="preserve">Acquired: 05.06.2023  23:47</text>
<text x="51.38" y="123" font-size="12.6" text-anchor="middle" letter-spacing="-0.476">0,0</text>
<text x="51.46" y="178" font-size="12.6" text-anchor="middle" letter-spacing="-0.177">-10,0</text>
<text x="51.46" y="232" font-size="12.6" text-anchor="middle" letter-spacing="-0.177">-20,0</text>
<text x="51.46" y="287" font-size="12.6" text-anchor="middle" letter-spacing="-0.177">-30,0</text>
<text x="51.46" y="341" font-size="12.6" text-anchor="middle" letter-spacing="-0.177">-40,0</text>
<text x="51.46" y="396" font-size="12.6" text-anchor="middle" letter-spacing="-0.177">-50,0</text>
<text x="51.46" y="450" font-size="12.6" text-anchor="middle" letter-spacing="-0.177">-60,0</text>
<text x="51.46" y="505" font-size="12.6" text-anchor="middle" letter-spacing="-0.177">-70,0</text>
<text x="51.46" y="559" font-size="12.6" text-anchor="middle" letter-spacing="-0.177">-80,0</text>
<text x="51.46" y="614" font-size="12.6" text-anchor="middle" letter-spacing="-0.177">-90,0</text>
<text x="51.58" y="668" font-size="12.6" text-anchor="middle" letter-spacing="-0.110">-100,0</text>
<text x="51.71" y="723" font-size="12.6" text-anchor="middle" letter-spacing="0.065">-110,0</text>
<text x="51.58" y="777" font-size="12.6" text-anchor="middle" letter-spacing="-0.110">-120,0</text>
<text x="51.58" y="831" font-size="12.6" text-anchor="middle" letter-spacing="-0.110">-130,0</text>
<text x="51.58" y="886" font-size="12.6" text-anchor="middle" letter-spacing="-0.110">-140,0</text>
<text x="51.58" y="940" font-size="12.6" text-anchor="middle" letter-spacing="-0.110">-150,0</text>
<text x="321.03" y="958" font-size="12.6" text-anchor="middle" letter-spacing="-0.553">10</text>
<text x="664.30" y="958" font-size="12.6" text-anchor="middle" letter-spacing="-0.352">100</text>
<text x="1007.31" y="958" font-size="12.6" text-anchor="middle" letter-spacing="-0.232">1000</text>
<text x="1351.29" y="958" font-size="12.6" text-anchor="middle" letter-spacing="-0.227">10000</text>
<text transform="translate(22.1 528.5) rotate(-90)" text-anchor="middle" font-size="13.7" font-weight="bold" letter-spacing=".1">dBFS</text>
</g>
</svg>
</body></html>
